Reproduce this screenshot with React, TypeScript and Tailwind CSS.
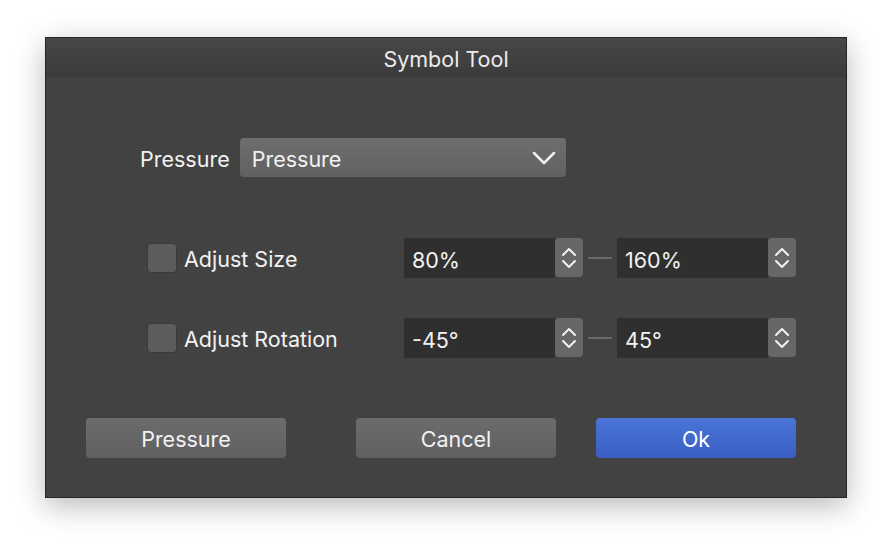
import React from "react";

const Stepper = () => (
  <div className="w-[28px] h-[39px] shrink-0 rounded-[4px] bg-[#676767] flex items-center justify-center">
    <svg width="16" height="26" viewBox="0 0 16 26" fill="none" stroke="#f2f2f2" strokeWidth="2" strokeLinecap="round" strokeLinejoin="round">
      <path d="M2 10 L8 4 L14 10" />
      <path d="M2 16 L8 22 L14 16" />
    </svg>
  </div>
);

const Field = ({ value }: { value: string }) => (
  <div className="flex w-[179px] h-[40px] shrink-0 items-start">
    <div className="w-[151px] h-[40px] bg-[#2f2f2f] flex items-center pl-[8px] pt-[4px] text-[21.5px] text-[#f2f2f2]">{value}</div>
    <Stepper />
  </div>
);

const Row = ({ label, a, b }: { label: string; a: string; b: string }) => (
  <div className="flex items-center h-[40px]">
    <div className="w-[358px] shrink-0 pl-[101px] flex items-center">
      <div className="w-[30px] h-[30px] shrink-0 rounded-[4px] bg-[#5c5c5c] border border-[#3a3a3a]" />
      <span className="ml-[7px] mt-[3px] text-[21.5px] text-[#f2f2f2] whitespace-nowrap">{label}</span>
    </div>
    <Field value={a} />
    <div className="w-[24px] h-[2px] shrink-0 bg-[#6a6a6a] mx-[5px]" />
    <Field value={b} />
  </div>
);

const btn = "h-[40px] w-[200px] rounded-[4px] flex items-center justify-center pt-[2px] text-[21.5px]";

export default function App() {
  return (
    <div className="w-[892px] h-[552px] bg-white pt-[37px] pl-[45px]" style={{ fontFamily: "Inter, 'Open Sans', sans-serif" }}>
      <div className="w-[802px] h-[461px] border border-[#262626] bg-[#424242] shadow-[0_8px_28px_rgba(0,0,0,0.28)] flex flex-col">
        <div className="h-[39px] pt-[3px] bg-gradient-to-b from-[#474747] to-[#3b3b3b] flex items-center justify-center text-[21.5px] text-[#ececec]">
          Symbol Tool
        </div>
        <div className="flex items-center mt-[61px] pl-[94px] h-[39px]">
          <span className="mt-[4px] text-[21.5px] text-[#f2f2f2]">Pressure</span>
          <div className="ml-[10px] w-[326px] h-[39px] rounded-[4px] bg-gradient-to-b from-[#6e6e6e] to-[#616161] flex items-center justify-between pl-[12px] pr-[10px]">
            <span className="mt-[4px] text-[21.5px] text-[#f2f2f2]">Pressure</span>
            <svg width="24" height="14" viewBox="0 0 24 14" fill="none" stroke="#f2f2f2" strokeWidth="2.5" strokeLinecap="round" strokeLinejoin="round">
              <path d="M2 2 L12 12 L22 2" />
            </svg>
          </div>
        </div>
        <div className="mt-[61px]">
          <Row label="Adjust Size" a="80%" b="160%" />
        </div>
        <div className="mt-[40px]">
          <Row label="Adjust Rotation" a="-45°" b="45°" />
        </div>
        <div className="mt-[60px] flex pl-[40px]">
          <div className={`${btn} bg-gradient-to-b from-[#6c6c6c] to-[#606060] text-[#f2f2f2]`}>Pressure</div>
          <div className={`${btn} ml-[70px] bg-gradient-to-b from-[#6c6c6c] to-[#606060] text-[#f2f2f2]`}>Cancel</div>
          <div className={`${btn} ml-[40px] bg-gradient-to-b from-[#4a74d8] to-[#3a5ec3] text-white`}>Ok</div>
        </div>
      </div>
    </div>
  );
}
